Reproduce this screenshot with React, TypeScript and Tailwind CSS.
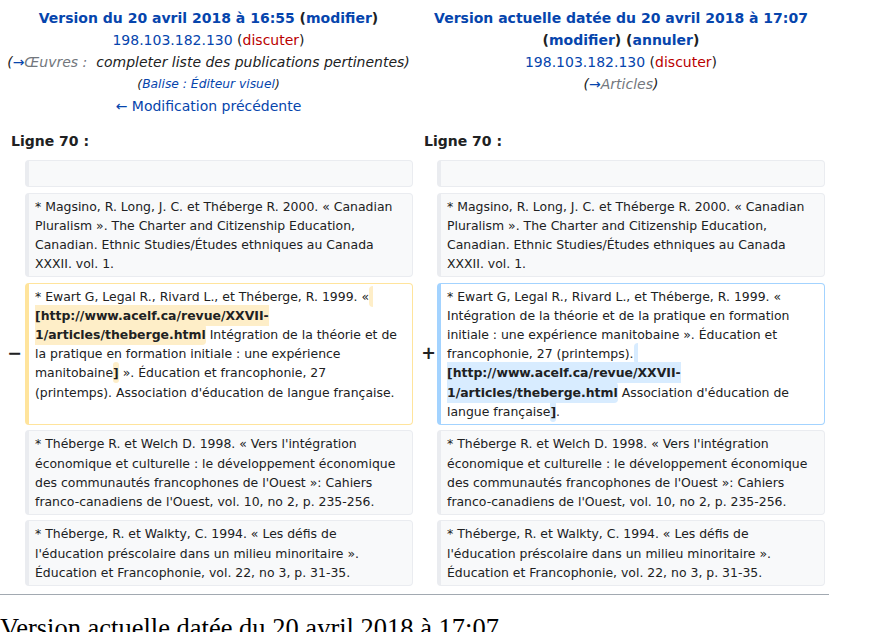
import React from "react";

const LINK = "text-[#0645ad]";
const RED = "text-[#ba0000]";

function Row({ children, className = "" }: { children: React.ReactNode; className?: string }) {
  return (
    <div className={"grid grid-cols-[17px_388px_16px_388px] gap-x-[4px] px-[4px] " + className}>
      {children}
    </div>
  );
}

function Marker({ sign, shift = "" }: { sign?: string; shift?: string }) {
  return (
    <div
      className={
        "flex items-center justify-end text-[17.5px] font-bold leading-[1.2] text-[#202122] " + shift
      }
    >
      {sign ?? ""}
    </div>
  );
}

type Kind = "context" | "del" | "add";

function Cell({ kind, children }: { kind: Kind; children?: React.ReactNode }) {
  const cls =
    kind === "context"
      ? "bg-[#f8f9fa] border-[#eaecf0]"
      : kind === "del"
      ? "bg-white border-[#ffe49c]"
      : "bg-white border-[#a3d3ff]";
  return (
    <div
      className={
        "border border-l-4 rounded-[4px] py-[3px] text-[12.45px] leading-[19.2px] text-[#202122] " + cls
      }
    >
      <div className="mx-[6px] whitespace-pre-wrap break-words">{children ?? <br />}</div>
    </div>
  );
}

function Del({ children }: { children: React.ReactNode }) {
  return <span className="bg-[#feeec8] font-bold rounded-[4px] py-[3px]">{children}</span>;
}
function Ins({ children }: { children: React.ReactNode }) {
  return <span className="bg-[#d8ecff] font-bold rounded-[4px] py-[3px]">{children}</span>;
}

const magsino =
  "* Magsino, R. Long, J. C. et Théberge R. 2000. « Canadian Pluralism ». The Charter and Citizenship Education, Canadian. Ethnic Studies/Études ethniques au Canada XXXII. vol. 1.";
const welch =
  "* Théberge R. et Welch D. 1998. « Vers l'intégration économique et culturelle : le développement économique des communautés francophones de l'Ouest »: Cahiers franco-canadiens de l'Ouest, vol. 10, no 2, p. 235-256.";
const walkty =
  "* Théberge, R. et Walkty, C. 1994. « Les défis de l'éducation préscolaire dans un milieu minoritaire ». Éducation et Francophonie, vol. 22, no 3, p. 31-35.";

export default function App() {
  return (
    <div
      className="w-[874px] h-[632px] overflow-hidden bg-white text-[#202122]"
      style={{ fontFamily: '"DejaVu Sans", sans-serif' }}
    >
      <div className="w-[829px]">
        {/* Header */}
        <Row className="pt-[7px]">
          <div className="col-span-2 text-center text-[14px] leading-[22px]">
            <div className="font-bold">
              <span className={LINK}>Version du 20 avril 2018 à 16:55</span> (
              <span className={LINK}>modifier</span>)
            </div>
            <div>
              <span className={LINK}>198.103.182.130</span> (<span className={RED}>discuter</span>)
            </div>
            <div className="italic">
              (<span className={LINK}>→</span>
              <span className="text-[#72777d]">Œuvres :&nbsp; </span>completer liste des publications pertinentes)
            </div>
            <div className="italic text-[12.3px]">
              (<span className={LINK}>Balise : Éditeur visuel</span>)
            </div>
            <div>
              <span className={LINK}>← Modification précédente</span>
            </div>
          </div>
          <div className="col-span-2 text-center text-[14px] leading-[22px]">
            <div className="font-bold">
              <span className={LINK}>Version actuelle datée du 20 avril 2018 à 17:07</span> (
              <span className={LINK}>modifier</span>) (<span className={LINK}>annuler</span>)
            </div>
            <div>
              <span className={LINK}>198.103.182.130</span> (<span className={RED}>discuter</span>)
            </div>
            <div className="italic">
              (<span className={LINK}>→</span>
              <span className="text-[#72777d]">Articles</span>)
            </div>
          </div>
        </Row>

        {/* Line numbers */}
        <Row className="mt-[13px]">
          <div className="col-span-2 pl-[7px] text-[14px] leading-[22px] font-bold">Ligne 70 :</div>
          <div className="col-span-2 pl-[7px] text-[14px] leading-[22px] font-bold">Ligne 70 :</div>
        </Row>

        <div className="mt-[8px] flex flex-col gap-y-[5.3px]">
          <Row>
            <Marker />
            <Cell kind="context" />
            <Marker />
            <Cell kind="context" />
          </Row>
          <Row>
            <Marker />
            <Cell kind="context">{magsino}</Cell>
            <Marker />
            <Cell kind="context">{magsino}</Cell>
          </Row>
          <Row>
            <Marker sign="−" shift="-mr-[1px]" />
            <Cell kind="del">
              {"* Ewart G, Legal R., Rivard L., et Théberge, R. 1999. «"}
              <Del>{" [http://www.acelf.ca/revue/XXVII-1/articles/theberge.html"}</Del>
              {" Intégration de la théorie et de la pratique en formation initiale : une expérience manitobaine"}
              <Del>]</Del>
              {" ». Éducation et francophonie, 27 (printemps). Association d'éducation de langue française."}
            </Cell>
            <Marker sign="+" shift="-mr-[3px]" />
            <Cell kind="add">
              {"* Ewart G, Legal R., Rivard L., et Théberge, R. 1999. « Intégration de la théorie et de la pratique en formation initiale : une expérience manitobaine ». Éducation et francophonie, 27 (printemps)."}
              <Ins>{" [http://www.acelf.ca/revue/XXVII-1/articles/theberge.html"}</Ins>
              {" Association d'éducation de langue française"}
              <Ins>]</Ins>
              {"."}
            </Cell>
          </Row>
          <Row>
            <Marker />
            <Cell kind="context">{welch}</Cell>
            <Marker />
            <Cell kind="context">{welch}</Cell>
          </Row>
          <Row>
            <Marker />
            <Cell kind="context">{walkty}</Cell>
            <Marker />
            <Cell kind="context">{walkty}</Cell>
          </Row>
        </div>

        <div className="mt-[8px] border-t border-[#a2a9b1]" />
        <div
          className="mt-[18px] text-[26.5px] leading-[1.15] text-black whitespace-nowrap"
          style={{ fontFamily: '"Liberation Serif", serif' }}
        >
          Version actuelle datée du 20 avril 2018 à 17:07
        </div>
      </div>
    </div>
  );
}
